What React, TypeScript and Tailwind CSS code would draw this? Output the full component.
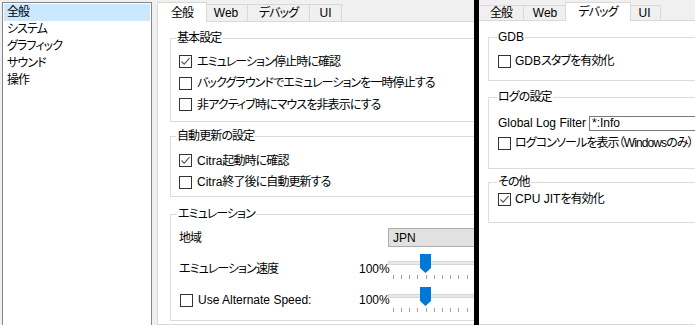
import React from 'react';

const jp = "[font-feature-settings:'palt'] tracking-[-0.9px]";

// latin runs keep normal spacing, the Japanese around them is set tight
function Txt({ s, tight }: { s: string; tight?: boolean }) {
    if (tight) return <span className={`whitespace-nowrap ${jp}`}>{s}</span>;
    const parts = s.split(/([A-Za-z0-9 :]+)/).filter((p) => p !== '');
    return (
        <span className={`whitespace-nowrap ${jp}`}>
            {parts.map((p, i) =>
                /^[A-Za-z0-9 :]+$/.test(p) ? (
                    <span key={i} className="tracking-normal">
                        {p}
                    </span>
                ) : (
                    <React.Fragment key={i}>{p}</React.Fragment>
                ),
            )}
        </span>
    );
}

type Tab = { label: string; w: string; wSel: string };

const tabs: Tab[] = [
    { label: '全般', w: 'w-[46px]', wSel: 'w-[50px]' },
    { label: 'Web', w: 'w-[43px]', wSel: 'w-[47px]' },
    { label: 'デバッグ', w: 'w-[62px]', wSel: 'w-[66px]' },
    { label: 'UI', w: 'w-[32px]', wSel: 'w-[36px]' },
];

function TabStrip({ active, tall }: { active: number; tall: boolean }) {
    return (
        <div className={`flex items-end pl-[2px] ${tall ? 'h-[21px]' : 'h-[20px]'}`}>
            {tabs.map((t, i) => {
                const sel = i === active;
                const cls = sel
                    ? `relative z-10 -mx-[2px] -mb-px ${t.wSel} ${tall ? 'h-[20px]' : 'h-[19px]'} border-x border-t border-[#d9d9d9] bg-white`
                    : `${t.w} ${tall ? 'h-[17px]' : 'h-[15px]'} border-t border-r border-[#d9d9d9] bg-[#f0f0f0] ${i === 0 ? 'border-l' : ''}`;
                return (
                    <div key={t.label} className={`flex shrink-0 items-center justify-center ${cls}`}>
                        <Txt s={t.label} />
                    </div>
                );
            })}
        </div>
    );
}

function Check({ checked }: { checked?: boolean }) {
    return (
        <span className="flex h-[13px] w-[13px] shrink-0 items-center justify-center border border-[#333333] bg-white">
            {checked && (
                <svg width="11" height="11" viewBox="0 0 11 11">
                    <path d="M1.5 5.5 L4.2 8.2 L9.5 2.2" stroke="#555555" strokeWidth="1.1" fill="none" />
                </svg>
            )}
        </span>
    );
}

function CheckRow({ label, checked, h, gap, tight }: { label: string; checked?: boolean; h: string; gap: string; tight?: boolean }) {
    return (
        <div className={`flex items-center ${h} ${gap}`}>
            <Check checked={checked} />
            <Txt s={label} tight={tight} />
        </div>
    );
}

function Group({ title, className, legendMl, children }: { title: string; className?: string; legendMl: string; children: React.ReactNode }) {
    return (
        <fieldset className={`border border-[#dcdcdc] ${className ?? ''}`}>
            <legend className={`h-[14px] px-[1px] leading-[14px] ${legendMl}`}>
                <Txt s={title} />
            </legend>
            {children}
        </fieldset>
    );
}

function Slider() {
    return (
        <div className="flex w-[100px] shrink-0 flex-col self-start">
            <div className="relative h-[21px]">
                <div className="mt-[7px] h-[4px] border border-[#d6d6d6] bg-[#e7eaea]" />
                <svg className="absolute left-[32px] top-0" width="11" height="19" viewBox="0 0 11 19">
                    <path d="M0 0H11V14L5.5 19L0 14Z" fill="#0078d7" />
                </svg>
            </div>
            <div className="flex pl-[4.7px]">
                {Array.from({ length: 12 }).map((_, i) => (
                    <div key={i} className="h-[4px] w-[8.22px] shrink-0">
                        <div className="h-full w-px bg-[#a3a3a3]" />
                    </div>
                ))}
            </div>
        </div>
    );
}

const menu = ['全般', 'システム', 'グラフィック', 'サウンド', '操作'];

export default function App() {
    return (
        <div className="flex h-[325px] w-[695px] overflow-hidden bg-[#f0f0f0] font-['Liberation_Sans','Noto_Sans_CJK_JP',sans-serif] text-[12px] text-black">
            {/* left shot: general tab */}
            <div className="flex w-[474px] shrink-0 overflow-hidden">
                <div className="ml-[2px] mt-[2px] h-[340px] w-[150px] shrink-0 border border-[#828790] bg-white p-px">
                    {menu.map((m, i) => (
                        <div key={m} className={`h-[17px] pl-[3px] leading-[17px] ${i === 0 ? 'bg-[#cce8ff]' : ''}`}>
                            <Txt s={m} />
                        </div>
                    ))}
                </div>
                <div className="ml-[5px] flex w-[340px] shrink-0 flex-col">
                    <TabStrip active={0} tall />
                    <div className="flex-1 border border-[#d9d9d9] bg-white px-[12px] pt-[9px]">
                        <Group title="基本設定" legendMl="ml-[5px]">
                            <div className="pb-[5.5px] pl-[8px] pt-[6px]">
                                <CheckRow h="h-[21.5px]" gap="gap-[5px]" checked label="エミュレーション停止時に確認" />
                                <CheckRow h="h-[21.5px]" gap="gap-[5px]" label="バックグラウンドでエミュレーションを一時停止する" />
                                <CheckRow h="h-[21.5px]" gap="gap-[5px]" label="非アクティブ時にマウスを非表示にする" />
                            </div>
                        </Group>
                        <Group title="自動更新の設定" legendMl="ml-[5px]" className="mt-[7px]">
                            <div className="pb-[3px] pl-[8px] pt-[7px]">
                                <CheckRow h="h-[21.5px]" gap="gap-[5px]" checked label="Citra起動時に確認" />
                                <CheckRow h="h-[21.5px]" gap="gap-[5px]" label="Citra終了後に自動更新する" />
                            </div>
                        </Group>
                        <Group title="エミュレーション" legendMl="ml-[6px]" className="mt-[10px]">
                            <div className="pb-[7px] pl-[8px] pt-[7px]">
                                <div className="flex h-[19px] items-center">
                                    <span className="w-[209px] shrink-0">
                                        <Txt s="地域" />
                                    </span>
                                    <div className="flex h-[19px] w-[100px] shrink-0 items-center border border-[#adadad] bg-[#e1e1e1] pl-[4px]">
                                        JPN
                                    </div>
                                </div>
                                <div className="mt-[7px] flex h-[30px] items-center">
                                    <span className="w-[180px] shrink-0">
                                        <Txt s="エミュレーション速度" />
                                    </span>
                                    <span className="w-[29px] shrink-0">100%</span>
                                    <Slider />
                                </div>
                                <div className="mt-[3px] flex h-[26px] items-center">
                                    <div className="flex w-[180px] shrink-0 items-center gap-[5px] pl-px">
                                        <Check />
                                        <span>Use Alternate Speed:</span>
                                    </div>
                                    <span className="w-[29px] shrink-0">100%</span>
                                    <Slider />
                                </div>
                            </div>
                        </Group>
                    </div>
                </div>
            </div>

            <div className="w-[5px] shrink-0 bg-black" />

            {/* right shot: debug tab */}
            <div className="flex w-[216px] shrink-0 overflow-hidden">
                <div className="-ml-[3px] flex w-[260px] shrink-0 flex-col">
                    <TabStrip active={2} tall={false} />
                    <div className="flex-1 border border-[#d9d9d9] bg-white px-[11px] pt-[9px]">
                        <Group title="GDB" legendMl="ml-[8px]">
                            <div className="pb-[8px] pl-[9px] pt-[6px]">
                                <CheckRow h="h-[22px]" gap="gap-[4px]" label="GDBスタブを有効化" />
                            </div>
                        </Group>
                        <Group title="ログの設定" legendMl="ml-[8px]" className="mt-[9px]">
                            <div className="pb-[15px] pl-[9px] pt-[9px]">
                                <div className="flex h-[20px] items-center">
                                    <span className="w-[91px] shrink-0 whitespace-nowrap">Global Log Filter</span>
                                    <div className="flex h-[15px] w-[120px] shrink-0 items-center border border-[#7a7a7a] bg-white pl-[2px]">
                                        *:Info
                                    </div>
                                </div>
                                <CheckRow h="h-[20px]" gap="gap-[4px]" tight label="ログコンソールを表示（Windowsのみ）" />
                            </div>
                        </Group>
                        <Group title="その他" legendMl="ml-[8px]" className="mt-[6px]">
                            <div className="pb-[13px] pl-[9px]">
                                <CheckRow h="h-[20px]" gap="gap-[4px]" checked label="CPU JITを有効化" />
                            </div>
                        </Group>
                    </div>
                </div>
            </div>
        </div>
    );
}
